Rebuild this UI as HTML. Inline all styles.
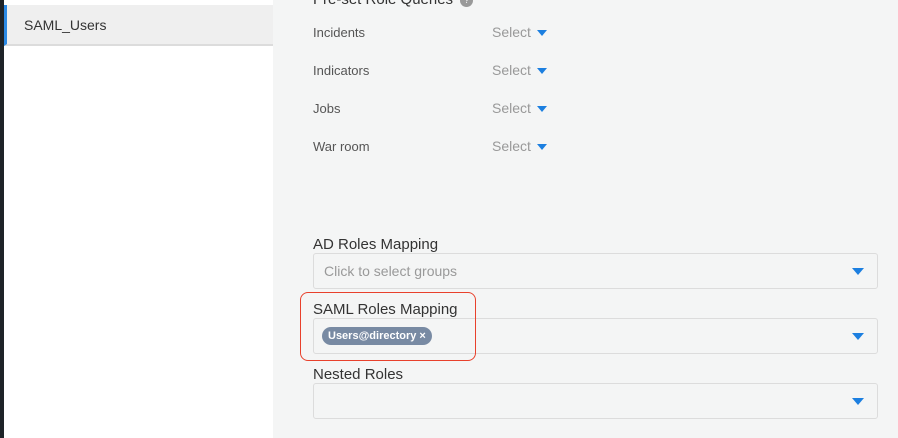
<!DOCTYPE html>
<html><head><style>
*{margin:0;padding:0;box-sizing:border-box}
body{width:898px;height:438px;overflow:hidden;background:#f4f5f5;font-family:"Liberation Sans",sans-serif;position:relative}
.dark{position:absolute;left:0;top:0;width:4px;height:438px;background:#1e2328}
.side{position:absolute;left:4px;top:0;width:269px;height:438px;background:#fff}
.sel{position:absolute;left:4px;top:5px;width:269px;height:41px;background:#efefef;border-left:3px solid #2b8ae6;border-bottom:2px solid #dcdcdc;font-size:14px;color:#333;padding:12px 0 0 17px}
.t{position:absolute;font-size:13px;color:#555}
.s{position:absolute;font-size:14px;color:#999}
.tri{position:absolute;width:0;height:0;border-left:5px solid transparent;border-right:5px solid transparent;border-top:6px solid #1c7fe0}
.h{position:absolute;left:313px;font-size:15px;color:#333}
.box{position:absolute;left:313px;width:565px;height:36px;background:#f4f5f5;border:1px solid #dcdcdc;border-radius:3px}
.red{position:absolute;left:300px;top:292px;width:176px;height:69px;border:1.5px solid #e8412c;border-radius:8px}
.tag{position:absolute;left:322px;top:327px;height:18px;padding:0 6px;background:#788aa3;color:#fff;border-radius:9px;font-size:11px;line-height:18px;font-weight:bold}
</style></head><body>
<div class="dark"></div><div class="side"></div>
<div class="sel">SAML_Users</div>
<div class="h" style="top:-9px">Pre-set Role Queries <span style="display:inline-block;width:13px;height:13px;margin-left:3px;border-radius:50%;background:#999;color:#fff;font-size:9px;text-align:center;line-height:13px;vertical-align:1px">?</span></div>
<div class="t" style="left:313px;top:25px">Incidents</div><div class="s" style="left:492px;top:24px">Select</div><div class="tri" style="left:537px;top:30px"></div>
<div class="t" style="left:313px;top:63px">Indicators</div><div class="s" style="left:492px;top:62px">Select</div><div class="tri" style="left:537px;top:68px"></div>
<div class="t" style="left:313px;top:101px">Jobs</div><div class="s" style="left:492px;top:100px">Select</div><div class="tri" style="left:537px;top:106px"></div>
<div class="t" style="left:313px;top:139px">War room</div><div class="s" style="left:492px;top:138px">Select</div><div class="tri" style="left:537px;top:144px"></div>
<div class="h" style="top:236px">AD Roles Mapping</div>
<div class="box" style="top:253px"><span style="position:absolute;left:10px;top:9px;font-size:14px;color:#999">Click to select groups</span></div>
<div class="tri" style="left:852px;top:268px;border-left-width:6px;border-right-width:6px;border-top-width:7px"></div>
<div class="h" style="top:301px">SAML Roles Mapping</div>
<div class="box" style="top:318px"></div>
<div class="tag">Users@directory ×</div>
<div class="tri" style="left:852px;top:333px;border-left-width:6px;border-right-width:6px;border-top-width:7px"></div>
<div class="red"></div>
<div class="h" style="top:366px">Nested Roles</div>
<div class="box" style="top:383px"></div>
<div class="tri" style="left:852px;top:398px;border-left-width:6px;border-right-width:6px;border-top-width:7px"></div>
</body></html>
